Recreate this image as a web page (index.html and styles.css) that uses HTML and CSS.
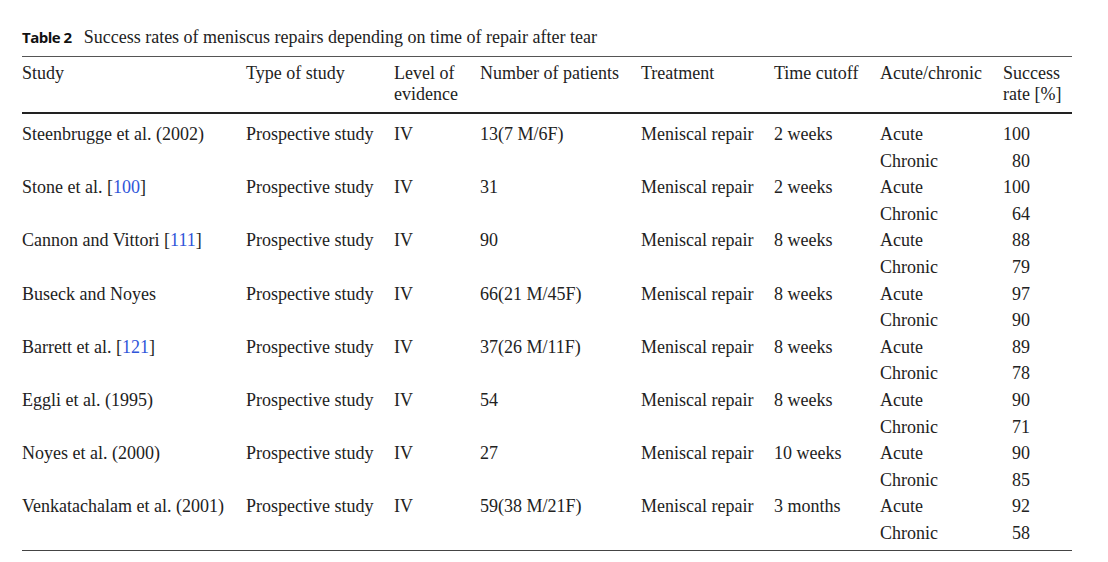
FILE: index.html
```html
<!DOCTYPE html>
<html>
<head>
<meta charset="utf-8">
<link rel="stylesheet" href="styles.css">
</head>
<body>
<div class="page">
  <div class="caption"><span class="label">Table 2</span><span class="title">Success rates of meniscus repairs depending on time of repair after tear</span></div>
  <table class="tbl">
    <colgroup>
      <col class="c-study"><col class="c-type"><col class="c-level"><col class="c-num"><col class="c-treat"><col class="c-time"><col class="c-ac"><col class="c-rate">
    </colgroup>
    <thead>
      <tr>
        <th>Study</th>
        <th>Type of study</th>
        <th>Level of<br>evidence</th>
        <th>Number of patients</th>
        <th>Treatment</th>
        <th>Time cutoff</th>
        <th>Acute/chronic</th>
        <th class="rate-h">Success<br>rate [%]</th>
      </tr>
    </thead>
    <tbody>
      <tr class="first"><td>Steenbrugge et al. (2002)</td><td>Prospective study</td><td>IV</td><td>13(7 M/6F)</td><td>Meniscal repair</td><td>2 weeks</td><td>Acute</td><td class="num">100</td></tr>
      <tr><td></td><td></td><td></td><td></td><td></td><td></td><td>Chronic</td><td class="num">80</td></tr>
      <tr><td>Stone et al. [<span class="ref">100</span>]</td><td>Prospective study</td><td>IV</td><td>31</td><td>Meniscal repair</td><td>2 weeks</td><td>Acute</td><td class="num">100</td></tr>
      <tr><td></td><td></td><td></td><td></td><td></td><td></td><td>Chronic</td><td class="num">64</td></tr>
      <tr><td>Cannon and Vittori [<span class="ref">111</span>]</td><td>Prospective study</td><td>IV</td><td>90</td><td>Meniscal repair</td><td>8 weeks</td><td>Acute</td><td class="num">88</td></tr>
      <tr><td></td><td></td><td></td><td></td><td></td><td></td><td>Chronic</td><td class="num">79</td></tr>
      <tr><td>Buseck and Noyes</td><td>Prospective study</td><td>IV</td><td>66(21 M/45F)</td><td>Meniscal repair</td><td>8 weeks</td><td>Acute</td><td class="num">97</td></tr>
      <tr><td></td><td></td><td></td><td></td><td></td><td></td><td>Chronic</td><td class="num">90</td></tr>
      <tr><td>Barrett et al. [<span class="ref">121</span>]</td><td>Prospective study</td><td>IV</td><td>37(26 M/11F)</td><td>Meniscal repair</td><td>8 weeks</td><td>Acute</td><td class="num">89</td></tr>
      <tr><td></td><td></td><td></td><td></td><td></td><td></td><td>Chronic</td><td class="num">78</td></tr>
      <tr><td>Eggli et al. (1995)</td><td>Prospective study</td><td>IV</td><td>54</td><td>Meniscal repair</td><td>8 weeks</td><td>Acute</td><td class="num">90</td></tr>
      <tr><td></td><td></td><td></td><td></td><td></td><td></td><td>Chronic</td><td class="num">71</td></tr>
      <tr><td>Noyes et al. (2000)</td><td>Prospective study</td><td>IV</td><td>27</td><td>Meniscal repair</td><td>10 weeks</td><td>Acute</td><td class="num">90</td></tr>
      <tr><td></td><td></td><td></td><td></td><td></td><td></td><td>Chronic</td><td class="num">85</td></tr>
      <tr><td>Venkatachalam et al. (2001)</td><td>Prospective study</td><td>IV</td><td>59(38 M/21F)</td><td>Meniscal repair</td><td>3 months</td><td>Acute</td><td class="num">92</td></tr>
      <tr class="last"><td></td><td></td><td></td><td></td><td></td><td></td><td>Chronic</td><td class="num">58</td></tr>
    </tbody>
  </table>
</div>
</body>
</html>
```

FILE: styles.css
```css
html, body {
  margin: 0;
  padding: 0;
  background: #ffffff;
}

.page {
  padding: 26px 36px 0 22px;
  color: #222222;
  font-family: "Liberation Serif", "Times New Roman", serif;
}

.caption {
  display: flex;
  align-items: baseline;
  gap: 12px;
  height: 30px;
  line-height: 22px;
}

.caption .label {
  font-family: "Open Sans", "Liberation Sans", sans-serif;
  font-weight: 700;
  font-size: 15px;
  letter-spacing: -0.5px;
  color: #111111;
}

.caption .title {
  font-size: 18px;
  color: #222222;
}

.tbl {
  width: 1050px;
  border-collapse: collapse;
  table-layout: fixed;
  font-size: 18px;
  border-top: 1.3px solid #555555;
  border-bottom: 1.5px solid #444444;
}

.c-study { width: 224px; }
.c-type { width: 148px; }
.c-level { width: 86px; }
.c-num { width: 161px; }
.c-treat { width: 133px; }
.c-time { width: 106px; }
.c-ac { width: 123px; }
.c-rate { width: 69px; }

.tbl th {
  font-weight: normal;
  text-align: left;
  vertical-align: top;
  line-height: 21px;
  padding: 6px 0 7px 0;
  border-bottom: 2px solid #222222;
  white-space: nowrap;
}

.tbl td {
  height: 26.6px;
  line-height: 26.6px;
  padding: 0;
  white-space: nowrap;
  vertical-align: middle;
}

.tbl tr.first td {
  padding-top: 7px;
}

.tbl tr.last td {
  padding-bottom: 3px;
}

.tbl td.num {
  text-align: right;
  padding-right: 42px;
}

.ref {
  color: #2f55d9;
}
```
